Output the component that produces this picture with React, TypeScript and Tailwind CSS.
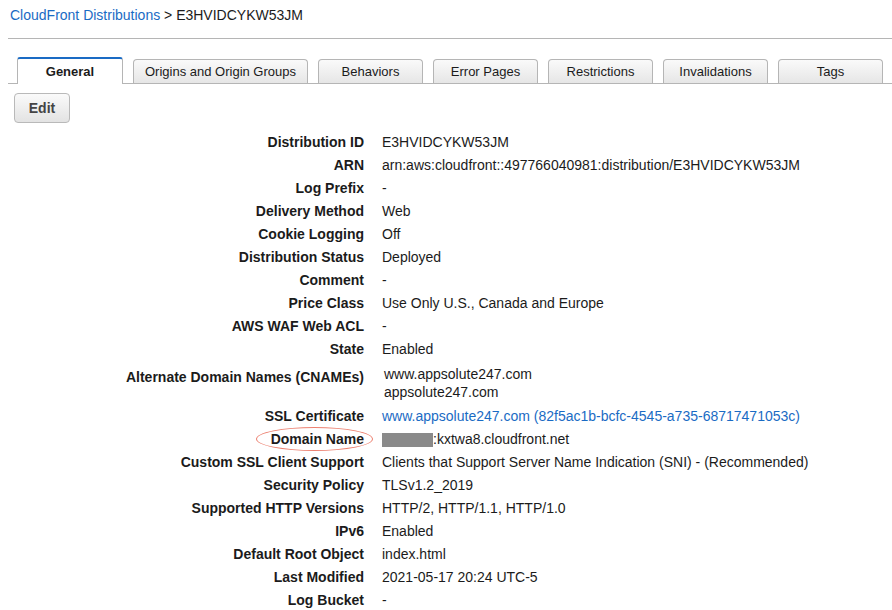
const tabs = [
  { label: "General", w: "w-[106px]", active: true },
  { label: "Origins and Origin Groups", w: "w-[175px]" },
  { label: "Behaviors", w: "w-[105px]" },
  { label: "Error Pages", w: "w-[105px]" },
  { label: "Restrictions", w: "w-[105px]" },
  { label: "Invalidations", w: "w-[105px]" },
  { label: "Tags", w: "w-[105px]" },
];

type Row = { label: string; value: React.ReactNode; tall?: boolean };

const rows: Row[] = [
  { label: "Distribution ID", value: "E3HVIDCYKW53JM" },
  { label: "ARN", value: "arn:aws:cloudfront::497766040981:distribution/E3HVIDCYKW53JM" },
  { label: "Log Prefix", value: "-" },
  { label: "Delivery Method", value: "Web" },
  { label: "Cookie Logging", value: "Off" },
  { label: "Distribution Status", value: "Deployed" },
  { label: "Comment", value: "-" },
  { label: "Price Class", value: "Use Only U.S., Canada and Europe" },
  { label: "AWS WAF Web ACL", value: "-" },
  { label: "State", value: "Enabled" },
  {
    label: "Alternate Domain Names (CNAMEs)",
    tall: true,
    value: (
      <div className="pl-[2px] leading-[18px]">
        <div>www.appsolute247.com</div>
        <div>appsolute247.com</div>
      </div>
    ),
  },
  {
    label: "SSL Certificate",
    value: (
      <span className="text-[#1a6bc4]">www.appsolute247.com (82f5ac1b-bcfc-4545-a735-68717471053c)</span>
    ),
  },
  {
    label: "Domain Name",
    value: (
      <span className="flex items-center">
        <span className="inline-block h-[14px] w-[51px] bg-[#8a8a8a]" />
        <span>:kxtwa8.cloudfront.net</span>
      </span>
    ),
  },
  { label: "Custom SSL Client Support", value: "Clients that Support Server Name Indication (SNI) - (Recommended)" },
  { label: "Security Policy", value: "TLSv1.2_2019" },
  { label: "Supported HTTP Versions", value: "HTTP/2, HTTP/1.1, HTTP/1.0" },
  { label: "IPv6", value: "Enabled" },
  { label: "Default Root Object", value: "index.html" },
  { label: "Last Modified", value: "2021-05-17 20:24 UTC-5" },
  { label: "Log Bucket", value: "-" },
];

export default function App() {
  return (
    <div className="h-[610px] w-[892px] overflow-hidden bg-white text-[14px] text-[#1b1b1b] [font-family:'Liberation_Sans',Arial,sans-serif]">
      <div className="px-[10px] pt-[6px] leading-[18px]">
        <span className="text-[#1a6bc4]">CloudFront Distributions</span>
        <span> &gt; E3HVIDCYKW53JM</span>
      </div>
      <div className="ml-[8px] mt-[14px] border-t border-[#b5b5b5]" />

      <div className="ml-[8px] mt-[18px] flex items-end gap-[10px] border-b border-[#b5b5b5] pl-[9px] text-[13px]">
        {tabs.map((t) =>
          t.active ? (
            <div
              key={t.label}
              className={`${t.w} -mb-px flex h-[27px] items-center justify-center rounded-t-[3px] border-x border-t-[2px] border-x-[#b5b5b5] border-t-[#1a6bc4] bg-white pt-[1px] font-bold`}
            >
              {t.label}
            </div>
          ) : (
            <div
              key={t.label}
              className={`${t.w} flex h-[24px] items-center justify-center rounded-t-[4px] border-x border-t border-[#b5b5b5] bg-gradient-to-b from-[#fafafa] to-[#e6e6e6]`}
            >
              {t.label}
            </div>
          )
        )}
      </div>

      <div className="ml-[14px] mt-[9px]">
        <button className="h-[30px] w-[56px] rounded-[4px] border border-[#b9b9b9] bg-gradient-to-b from-[#fafafa] to-[#e3e3e3] font-bold text-[#444]">
          Edit
        </button>
      </div>

      <div className="mt-[8px] grid grid-cols-[364px_1fr] gap-x-[18px]">
        {rows.map((r) => (
          <div key={r.label} className="contents">
            <div
              className={`relative text-right font-bold ${r.tall ? "h-[44px] pt-[7px] leading-[18px]" : "h-[23px] leading-[23px]"}`}
            >
              {r.label === "Domain Name" && (
                <span className="absolute right-[-9px] top-[-1px] h-[24px] w-[117px] rounded-[50%] border-[1.5px] border-[#ec8070]" />
              )}
              {r.label}
            </div>
            <div className={r.tall ? "h-[44px] pt-[4px]" : "flex h-[23px] items-center leading-[23px]"}>{r.value}</div>
          </div>
        ))}
      </div>
    </div>
  );
}
